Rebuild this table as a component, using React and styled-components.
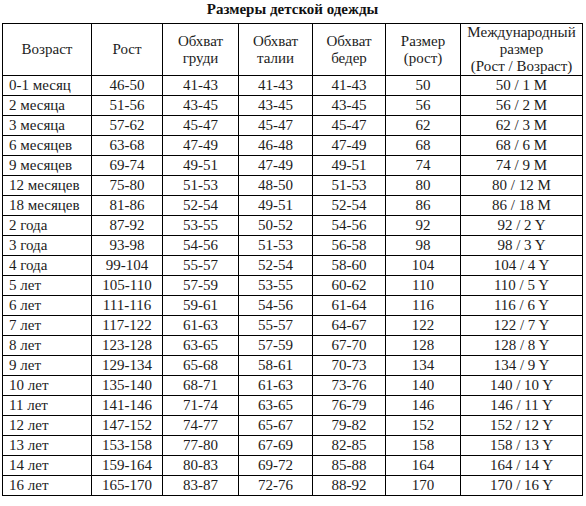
import React from "react";
import styled, { createGlobalStyle } from "styled-components";

const Global = createGlobalStyle`
  html, body {
    margin: 0;
    padding: 0;
    background: #ffffff;
  }
  body {
    font-family: "Liberation Serif", "Times New Roman", serif;
    color: #1c1c1c;
  }
`;

const Page = styled.div`
  width: 586px;
  padding-left: 2px;
  box-sizing: border-box;
`;

const Title = styled.div`
  width: 581px;
  height: 23px;
  text-align: center;
  font-weight: bold;
  font-size: 15px;
  line-height: 18px;
  color: #111;
`;

const SizeTable = styled.table`
  width: 581px;
  border-collapse: collapse;
  table-layout: fixed;
  font-size: 15px;
`;

const HeadCell = styled.th`
  border: 1px solid #000;
  font-weight: normal;
  text-align: center;
  vertical-align: middle;
  line-height: 17px;
  height: 50px;
  padding: 0;
`;

const Cell = styled.td`
  border: 1px solid #000;
  height: 19px;
  padding: 0 ${(p) => (p.$left ? "6px" : "0")};
  text-align: ${(p) => (p.$left ? "left" : "center")};
  line-height: 17px;
  white-space: nowrap;
`;

const widths = [89, 71, 76, 74, 73, 75, 122];

const headers = [
  ["Возраст"],
  ["Рост"],
  ["Обхват", "груди"],
  ["Обхват", "талии"],
  ["Обхват", "бедер"],
  ["Размер", "(рост)"],
  ["Международный", "размер", "(Рост / Возраст)"],
];

const rows = [
  ["0-1 месяц", "46-50", "41-43", "41-43", "41-43", "50", "50 / 1 M"],
  ["2 месяца", "51-56", "43-45", "43-45", "43-45", "56", "56 / 2 M"],
  ["3 месяца", "57-62", "45-47", "45-47", "45-47", "62", "62 / 3 M"],
  ["6 месяцев", "63-68", "47-49", "46-48", "47-49", "68", "68 / 6 M"],
  ["9 месяцев", "69-74", "49-51", "47-49", "49-51", "74", "74 / 9 M"],
  ["12 месяцев", "75-80", "51-53", "48-50", "51-53", "80", "80 / 12 M"],
  ["18 месяцев", "81-86", "52-54", "49-51", "52-54", "86", "86 / 18 M"],
  ["2 года", "87-92", "53-55", "50-52", "54-56", "92", "92 / 2 Y"],
  ["3 года", "93-98", "54-56", "51-53", "56-58", "98", "98 / 3 Y"],
  ["4 года", "99-104", "55-57", "52-54", "58-60", "104", "104 / 4 Y"],
  ["5 лет", "105-110", "57-59", "53-55", "60-62", "110", "110 / 5 Y"],
  ["6 лет", "111-116", "59-61", "54-56", "61-64", "116", "116 / 6 Y"],
  ["7 лет", "117-122", "61-63", "55-57", "64-67", "122", "122 / 7 Y"],
  ["8 лет", "123-128", "63-65", "57-59", "67-70", "128", "128 / 8 Y"],
  ["9 лет", "129-134", "65-68", "58-61", "70-73", "134", "134 / 9 Y"],
  ["10 лет", "135-140", "68-71", "61-63", "73-76", "140", "140 / 10 Y"],
  ["11 лет", "141-146", "71-74", "63-65", "76-79", "146", "146 / 11 Y"],
  ["12 лет", "147-152", "74-77", "65-67", "79-82", "152", "152 / 12 Y"],
  ["13 лет", "153-158", "77-80", "67-69", "82-85", "158", "158 / 13 Y"],
  ["14 лет", "159-164", "80-83", "69-72", "85-88", "164", "164 / 14 Y"],
  ["16 лет", "165-170", "83-87", "72-76", "88-92", "170", "170 / 16 Y"],
];

export default function App() {
  return (
    <Page>
      <Global />
      <Title>Размеры детской одежды</Title>
      <SizeTable>
        <colgroup>
          {widths.map((w, i) => (
            <col key={i} style={{ width: w }} />
          ))}
        </colgroup>
        <thead>
          <tr>
            {headers.map((lines, i) => (
              <HeadCell key={i}>
                {lines.map((l, j) => (
                  <div key={j}>{l}</div>
                ))}
              </HeadCell>
            ))}
          </tr>
        </thead>
        <tbody>
          {rows.map((r, i) => (
            <tr key={i}>
              {r.map((v, j) => (
                <Cell key={j} $left={j === 0}>
                  {v}
                </Cell>
              ))}
            </tr>
          ))}
        </tbody>
      </SizeTable>
    </Page>
  );
}
